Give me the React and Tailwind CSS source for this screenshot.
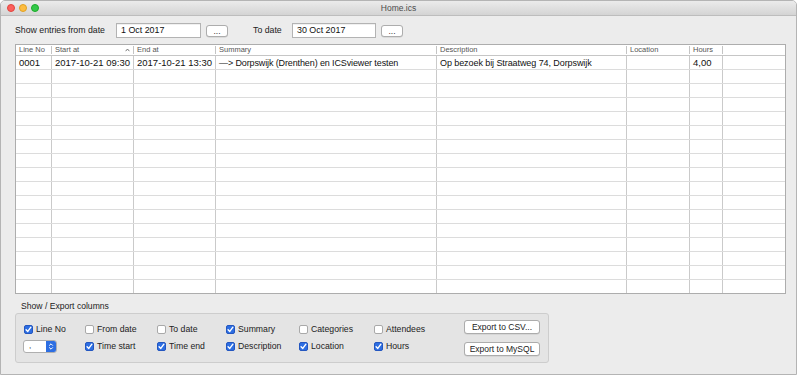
import React from "react";

const cols = [
  "w-[36px]",
  "w-[82px]",
  "w-[82px]",
  "w-[221px]",
  "w-[190px]",
  "w-[63px]",
  "w-[33px]",
  "flex-1",
];

const headers = ["Line No", "Start at", "End at", "Summary", "Description", "Location", "Hours", ""];
const row1 = [
  "0001",
  "2017-10-21 09:30",
  "2017-10-21 13:30",
  "\u2014> Dorpswijk (Drenthen) en ICSviewer testen",
  "Op bezoek bij Straatweg 74, Dorpswijk",
  "",
  "4,00",
  "",
];
const cellText = [
  "text-[9.5px]",
  "text-[9.5px]",
  "text-[9.5px]",
  "text-[9px] tracking-[-0.12px]",
  "text-[9px] tracking-[-0.08px]",
  "text-[9.5px]",
  "text-[9.5px]",
  "text-[9.5px]",
];

function Check({ checked }) {
  return checked ? (
    <span className="flex h-[9px] w-[9px] shrink-0 items-center justify-center rounded-[2px] border border-[#2356c0] bg-[#2d6ee2]">
      <svg width="7" height="7" viewBox="0 0 7 7">
        <path d="M1.1 3.7 L2.8 5.4 L5.9 1.2" stroke="white" strokeWidth="1.4" fill="none" strokeLinecap="round" strokeLinejoin="round" />
      </svg>
    </span>
  ) : (
    <span className="block h-[9px] w-[9px] shrink-0 rounded-[2px] border border-[#a9a9a9] bg-white" />
  );
}

function CB({ checked, label }) {
  return (
    <div className="flex items-center gap-[3px]">
      <Check checked={checked} />
      <span className="text-[8.7px] leading-[11px] text-[#222]">{label}</span>
    </div>
  );
}

function SmallBtn() {
  return (
    <div className="flex h-[12px] w-[22px] items-center justify-center rounded-[3px] border border-[#adadad] bg-white shadow-[0_0.5px_0.5px_rgba(0,0,0,0.15)]">
      <span className="text-[8.5px] leading-[10px] text-[#333]">...</span>
    </div>
  );
}

function Input({ value, w }) {
  return (
    <div className={`flex h-[15px] items-center border border-[#b3b3b3] bg-white pl-[4px] shadow-[inset_0_1px_0_rgba(0,0,0,0.06)] ${w}`}>
      <span className="text-[8.9px] leading-[11px] text-[#111]">{value}</span>
    </div>
  );
}

export default function App() {
  const rows = Array.from({ length: 17 });
  return (
    <div className="h-[377px] w-[800px] bg-white font-['Liberation_Sans',Arial,sans-serif]">
      <div className="flex h-[375px] w-[797px] flex-col overflow-hidden rounded-t-[5px] border border-[#b4b4b4] bg-[#ececec]">
        {/* title bar */}
        <div className="relative flex h-[15px] items-center justify-center border-b border-[#bdbdbd] bg-gradient-to-b from-[#ebebeb] to-[#d4d4d4]">
          <div className="absolute left-[6px] top-[3px] flex gap-[4px]">
            <span className="block h-[8px] w-[8px] rounded-full border-[0.5px] border-[#e0443e] bg-[#fc605c]" />
            <span className="block h-[8px] w-[8px] rounded-full border-[0.5px] border-[#dea123] bg-[#fdbc40]" />
            <span className="block h-[8px] w-[8px] rounded-full border-[0.5px] border-[#1aab29] bg-[#34c84a]" />
          </div>
          <span className="text-[8.5px] leading-[10px] text-[#4d4d4d]">Home.ics</span>
        </div>

        {/* body */}
        <div className="flex flex-1 flex-col pl-[14px]">
          {/* top row */}
          <div className="mt-[7px] flex h-[15px] items-center">
            <span className="w-[101px] text-[8.75px] leading-[11px] text-[#222]">Show entries from date</span>
            <Input value="1 Oct 2017" w="w-[85px]" />
            <div className="ml-[5px]"><SmallBtn /></div>
            <span className="ml-[25px] w-[39px] text-[8.75px] leading-[11px] text-[#222]">To date</span>
            <Input value="30 Oct 2017" w="w-[84px]" />
            <div className="ml-[5px]"><SmallBtn /></div>
          </div>

          {/* table */}
          <div className="mt-[6px] flex h-[250px] w-[771px] flex-col overflow-hidden border border-[#adadad] bg-white">
            <div className="flex h-[11px] shrink-0 border-b border-[#c6c6c6]">
              {headers.map((h, i) => (
                <div key={i} className={`flex items-center justify-between ${cols[i]}`}>
                  <span className="pl-[3px] text-[7.5px] leading-[10px] text-[#555]">{h}</span>
                  <div className="flex items-center gap-[3px]">
                    {i === 1 && (
                      <svg width="5" height="4" viewBox="0 0 5 4">
                        <path d="M0.6 3.2 L2.5 1 L4.4 3.2" stroke="#666" strokeWidth="0.9" fill="none" />
                      </svg>
                    )}
                    {i < 7 && <span className="block h-[8px] w-px bg-[#c4c4c4]" />}
                  </div>
                </div>
              ))}
            </div>
            {rows.map((_, r) => (
              <div key={r} className="flex h-[14px] shrink-0 border-b border-[#dcdcdc]">
                {cols.map((c, i) => (
                  <div key={i} className={`flex items-center ${c} ${i < 7 ? "border-r border-[#cacaca]" : ""}`}>
                    {r === 0 && (
                      <span className={`whitespace-nowrap pl-[3px] leading-[12px] text-[#111] ${cellText[i]}`}>{row1[i]}</span>
                    )}
                  </div>
                ))}
              </div>
            ))}
          </div>

          {/* export section */}
          <span className="ml-[6px] mt-[7px] text-[8.6px] leading-[11px] text-[#222]">Show / Export columns</span>
          <div className="mt-[1px] flex h-[50px] w-[534px] rounded-[3px] border border-[#cdcdcd] bg-[#e4e4e4] pl-[8px] pr-[7px]">
            <div className="grid grid-cols-[61px_72px_69px_73px_75px_90px] grid-rows-[17px_17px] pt-[7px]">
              <div className="flex items-center"><CB checked label="Line No" /></div>
              <div className="flex items-center"><CB label="From date" /></div>
              <div className="flex items-center"><CB label="To date" /></div>
              <div className="flex items-center"><CB checked label="Summary" /></div>
              <div className="flex items-center"><CB label="Categories" /></div>
              <div className="flex items-center"><CB label="Attendees" /></div>
              <div className="flex items-center">
                <div className="-ml-[1px] flex h-[13px] w-[34px] overflow-hidden rounded-[3px] border border-[#afafaf] bg-white">
                  <div className="flex-1 pl-[5px] text-[8px] leading-[10px] text-[#222]">,</div>
                  <div className="flex w-[10px] items-center justify-center bg-[#2d6ee2]">
                    <svg width="6" height="9" viewBox="0 0 6 9">
                      <path d="M1.2 3.6 L3 1.8 L4.8 3.6 M1.2 5.4 L3 7.2 L4.8 5.4" stroke="white" strokeWidth="1" fill="none" />
                    </svg>
                  </div>
                </div>
              </div>
              <div className="flex items-center"><CB checked label="Time start" /></div>
              <div className="flex items-center"><CB checked label="Time end" /></div>
              <div className="flex items-center"><CB checked label="Description" /></div>
              <div className="flex items-center"><CB checked label="Location" /></div>
              <div className="flex items-center"><CB checked label="Hours" /></div>
            </div>
            <div className="flex w-[76px] flex-col gap-[8px] pt-[6px]">
              <div className="flex h-[14px] items-center justify-center rounded-[3px] border border-[#acacac] bg-white shadow-[0_0.5px_0.5px_rgba(0,0,0,0.12)]">
                <span className="text-[8.5px] leading-[11px] text-[#222]">Export to CSV...</span>
              </div>
              <div className="flex h-[14px] items-center justify-center rounded-[3px] border border-[#acacac] bg-white shadow-[0_0.5px_0.5px_rgba(0,0,0,0.12)]">
                <span className="text-[8.5px] leading-[11px] text-[#222]">Export to MySQL</span>
              </div>
            </div>
          </div>
        </div>
      </div>
    </div>
  );
}
